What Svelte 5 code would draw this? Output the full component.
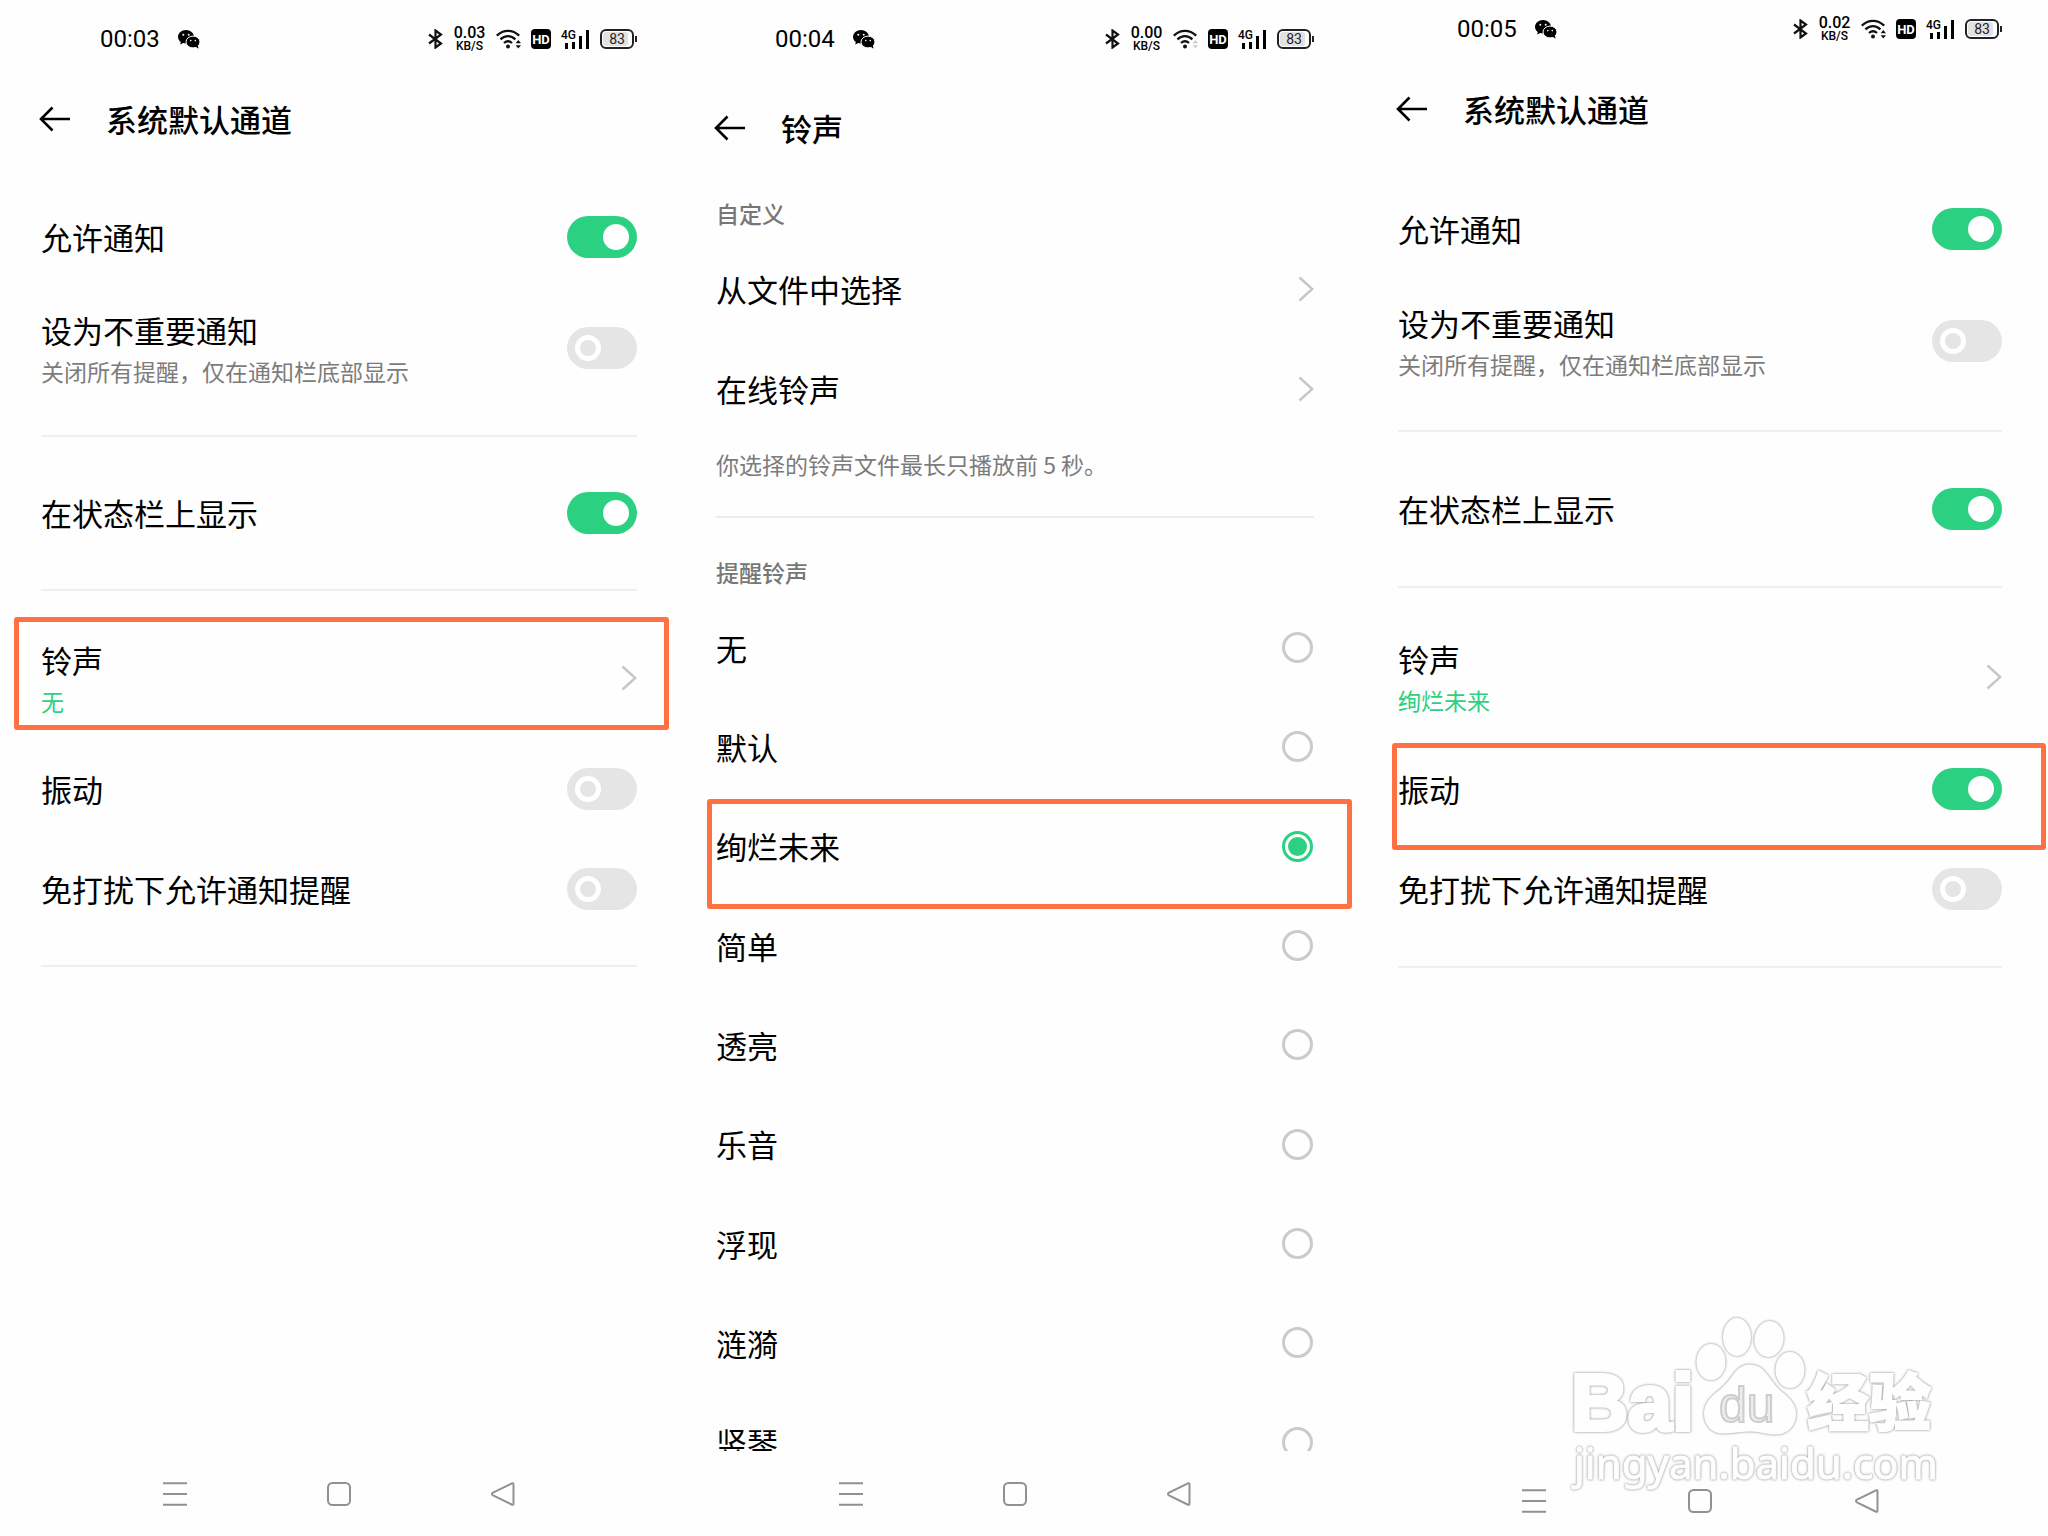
<script>
  const screens = [
    { id: 'before', time: '00:03', speed: '0.03', active: true, ringtone: '无', vibrate: false, marked: 'ringtone' },
    { id: 'after', time: '00:05', speed: '0.02', active: true, ringtone: '绚烂未来', vibrate: true, marked: 'vibrate' }
  ];
  const tones = ['无', '默认', '绚烂未来', '简单', '透亮', '乐音', '浮现', '涟漪', '竖琴'];
  let selected = $state('绚烂未来');
</script>

{#snippet statusBar(time, speed, active)}
  <header class="status">
    <span class="time">{time}</span>
    <svg class="wechat" width="22" height="19" viewBox="0 0 22 19" aria-hidden="true">
      <path d="M8 0C3.600 0 0 3 0 6.800c0 2.100 1.100 3.900 2.800 5.200L2.200 14.600l3-1.500c.9.200 1.800.4 2.800.4 4.400 0 8-3 8-6.700S12.400 0 8 0z" />
      <ellipse cx="15" cy="12" rx="7" ry="5.900" stroke="#fefefe" stroke-width="1" />
      <path d="M17.500 16.500l3 2.200-.5-3.200z" />
      <g fill="#fefefe"><circle cx="5.300" cy="4.800" r="1" /><circle cx="10.700" cy="4.800" r="1" /><circle cx="12.800" cy="10.600" r=".8" /><circle cx="17.300" cy="10.600" r=".8" /></g>
    </svg>
    <div class="indicators">
      <svg width="15" height="20" viewBox="0 0 15 20" fill="none" stroke="#111" stroke-width="2.200" aria-hidden="true">
        <path d="M1 5.500l12 9-5.500 4V1.500l5.500 4-12 9" />
      </svg>
      <span class="speed"><b>{speed}</b><small>KB/S</small></span>
      <svg width="25" height="20" viewBox="0 0 25 20" fill="none" stroke="#111" stroke-width="2.300" aria-hidden="true">
        <path d="M.8 6.600C7.500.2 16.500.2 23.200 6.600M4.400 10.400c4.600-4.400 10.600-4.400 15 0M8 14c2.600-2.300 5.500-2.300 8 0" />
        <circle cx="12" cy="17.500" r="2" fill="#111" stroke="none" />
        <path class:idle={!active} d="M19.600 14.200l2.700-3.200 2.700 3.200zM19.600 16.200l2.700 3.200 2.700-3.200z" fill="#111" stroke="none" />
      </svg>
      <svg width="20" height="20" viewBox="0 0 20 20" aria-label="HD">
        <rect width="20" height="20" rx="4" fill="#000" />
        <text class="hd" x="10" y="15" text-anchor="middle">HD</text>
      </svg>
      <svg width="29" height="20" viewBox="0 0 29 20" aria-label="4G">
        <text class="gen" x="0" y="10">4G</text>
        <path d="M4 14h3v6H4zM11 13h3v7h-3zM18 7h3v13h-3zM25 1h3v19h-3z" fill="#000" />
      </svg>
      <svg width="37" height="20" viewBox="0 0 37 20" aria-label="83%">
        <rect x="3" y="3" width="25" height="14" rx="3" fill="#e2e2e2" />
        <rect x="1" y="1" width="32" height="18" rx="5" fill="none" stroke="#222" stroke-width="2" />
        <path d="M35 7h2v6h-2z" fill="#222" />
        <text class="charge" x="17" y="15" text-anchor="middle">83</text>
      </svg>
    </div>
  </header>
{/snippet}

{#snippet titleBar(title)}
  <div class="title-bar">
    <button class="back" aria-label="返回">
      <svg width="32" height="26" viewBox="0 0 32 26" fill="none" stroke="#000" stroke-width="2.600"><path d="M31 13H2M13.500 1.500L2 13l11.500 11.500" /></svg>
    </button>
    <h1>{title}</h1>
  </div>
{/snippet}

{#snippet chevron()}
  <svg width="16" height="26" viewBox="0 0 16 26" fill="none" stroke="#c6c6c6" stroke-width="2.400" aria-hidden="true"><path d="M1.500 1.500L14.300 13 1.500 24.500" /></svg>
{/snippet}

{#snippet navBar()}
  <nav class="nav">
    <button aria-label="菜单"><svg width="24" height="24" viewBox="0 0 24 24"><path d="M0 1.200h24M0 12h24M0 22.800h24" /></svg></button>
    <button aria-label="主页"><svg width="24" height="24" viewBox="0 0 24 24"><rect x="1" y="1" width="22" height="22" rx="4.500" /></svg></button>
    <button aria-label="后退"><svg width="24" height="24" viewBox="0 0 24 24"><path d="M21 1.300L2 10.700q-2.200 1.300 0 2.600L21 22.700q1.500.5 1.500-1.200v-19q0-1.700-1.500-1.200z" /></svg></button>
  </nav>
{/snippet}

{#snippet settings(s)}
  <section class="phone {s.id}">
    {@render statusBar(s.time, s.speed, s.active)}
    {@render titleBar('系统默认通道')}
    <main class="settings">
      <div class="group">
        <label class="row"><span class="name">允许通知</span><input class="switch" type="checkbox" checked /></label>
        <label class="row tall">
          <span class="stack"><span class="name">设为不重要通知</span><span class="note">关闭所有提醒，仅在通知栏底部显示</span></span>
          <input class="switch" type="checkbox" />
        </label>
      </div>
      <div class="group">
        <label class="row"><span class="name">在状态栏上显示</span><input class="switch" type="checkbox" checked /></label>
      </div>
      <div class="group">
        <button class="row tall" class:marked={s.marked === 'ringtone'}>
          <span class="stack"><span class="name">铃声</span><span class="note value">{s.ringtone}</span></span>
          {@render chevron()}
        </button>
        <label class="row" class:marked={s.marked === 'vibrate'}><span class="name">振动</span><input class="switch" type="checkbox" checked={s.vibrate} /></label>
        <label class="row"><span class="name">免打扰下允许通知提醒</span><input class="switch" type="checkbox" /></label>
      </div>
    </main>
    {@render navBar()}
  </section>
{/snippet}

<div class="board">
  {@render settings(screens[0])}

  <section class="phone picker">
    {@render statusBar('00:04', '0.00', false)}
    {@render titleBar('铃声')}
    <main>
      <h2>自定义</h2>
      <button class="row"><span class="name">从文件中选择</span>{@render chevron()}</button>
      <button class="row"><span class="name">在线铃声</span>{@render chevron()}</button>
      <p class="hint">你选择的铃声文件最长只播放前 5 秒。</p>
      <h2>提醒铃声</h2>
      <div class="tones">
        <div class="tone-list">
          {#each tones as tone}
            <label class="row" class:marked={tone === '绚烂未来'}>
              <span class="name">{tone}</span><input class="radio" type="radio" name="tone" value={tone} bind:group={selected} />
            </label>
          {/each}
        </div>
      </div>
    </main>
    {@render navBar()}
  </section>

  {@render settings(screens[1])}

  <svg class="watermark" width="376" height="190" viewBox="0 0 376 190" aria-label="Baidu 经验">
    <g class="soft">
      <text class="bai" x="1" y="120">Bai</text>
      <ellipse cx="141" cy="52" rx="13.500" ry="17" />
      <ellipse cx="167" cy="27" rx="13" ry="18" />
      <ellipse cx="199" cy="29" rx="13.500" ry="17" transform="rotate(8 199 29)" />
      <ellipse cx="220" cy="60" rx="13.500" ry="17" />
      <path d="M180 55.500c8 0 12 4 16 9 5 6 7 11 14 17 9 7 15 13 15 22 0 12-8 20-19 20-9 0-17-3-26-3s-18 2-27 2c-12 0-18-9-18-19 0-9 5-15 14-22 8-6 11-11 16-18 4-5 8-8 15-8z" />
      <text class="jy" x="237" y="116">经验</text>
      <text class="site" x="4" y="169">jingyan.baidu.com</text>
    </g>
    <text class="du" x="149" y="112">du</text>
  </svg>
</div>

<style>
  :global(body) { margin: 0; background: #fefefe; }
  .board {
    position: relative;
    display: grid;
    grid-template-columns: 676fr 678fr 694fr;
    min-height: 100vh;
    color: #000;
    font-family: "Noto Sans CJK SC", sans-serif;
    overflow: hidden;
  }
  .phone { display: flex; flex-direction: column; min-width: 0; box-sizing: border-box; }
  .before { --row-tall: 122px; --pad: 26px; --mark: 0 -32px 9px -27px; padding: 15px 39px 30px 41px; }
  .picker { --mark: 2px -39px -13px -9px; padding: 15px 40px 30px; }
  .after { --row-tall: 124px; --pad: 27px; --mark: 4px -44px -11px -6px; padding: 5px 46px 23px 44px; }

  button { padding: 0; border: 0; background: none; color: inherit; font: inherit; text-align: left; }
  svg { display: block; flex: none; }

  .status { display: flex; align-items: center; height: 48px; padding-left: 59px; font-family: Roboto, sans-serif; }
  .time { font-size: 24px; line-height: 30px; }
  .wechat { margin-left: 18px; }
  .indicators { display: flex; align-items: center; gap: 10px; margin-left: auto; }
  .speed { display: flex; flex-direction: column; align-items: center; width: 33px; }
  .speed b { font-size: 16px; line-height: 14px; font-weight: 500; }
  .speed small { font-size: 12px; line-height: 12px; font-weight: 500; }
  .idle { opacity: .2; }
  .hd { font: 700 13px Roboto, sans-serif; fill: #fff; }
  .gen { font: 500 12px Roboto, sans-serif; }
  .charge { font: 400 14px Roboto, sans-serif; fill: #222; }

  .title-bar { display: flex; align-items: center; gap: 35px; height: 46px; margin: 33px 0 45px -2px; }
  .after .title-bar { margin-bottom: 47px; }
  .picker .title-bar { margin: 42px 0 44px -2px; }
  h1 { margin: 0; font-size: 31px; line-height: 44px; font-weight: 500; }

  .group { padding-bottom: var(--pad); margin-bottom: var(--pad); border-bottom: 2px solid #efefef; }
  .row { position: relative; display: flex; align-items: center; justify-content: space-between; width: 100%; height: 100px; }
  .tall { height: var(--row-tall); }
  .name { font-size: 31px; line-height: 46px; }
  .stack { display: flex; flex-direction: column; }
  .note { font-size: 23px; line-height: 36px; color: #7c7c7c; }
  .value { color: #2bd181; }
  .marked::after { content: ""; position: absolute; inset: var(--mark); border: 5px solid #ff7043; border-radius: 3px; pointer-events: none; }

  .switch { appearance: none; display: flex; align-items: center; box-sizing: border-box; flex: none; width: 70px; height: 42px; margin: 0; padding: 0 8px; border-radius: 21px; background: #e5e5e5; }
  .switch::before { content: ""; box-sizing: border-box; width: 26px; height: 26px; border: 5px solid #fff; border-radius: 50%; }
  .switch:checked { justify-content: flex-end; background: #2bd181; }
  .switch:checked::before { background: #fff; }

  h2 { margin: 0; font-size: 23px; line-height: 36px; font-weight: 500; color: #777; }
  .picker main h2:first-child { margin-bottom: 8px; }
  .hint { margin: 0 0 36px; padding: 7px 0 34px; border-bottom: 2px solid #ececec; font-size: 23px; line-height: 36px; color: #7c7c7c; }
  .tones { height: 853px; margin: 8px -40px 0; padding: 0 41px 0 40px; overflow: hidden; }
  .tone-list { display: grid; grid-template-rows: repeat(9, 1fr); height: 894px; }
  .tone-list .row { height: auto; }
  .radio { appearance: none; display: grid; place-items: center; box-sizing: border-box; width: 31px; height: 31px; margin: 0; border: 3px solid #cbcbcb; border-radius: 50%; }
  .radio:checked { border-color: #2bd181; }
  .radio:checked::before { content: ""; width: 19px; height: 19px; border-radius: 50%; background: #2bd181; }

  .nav { display: flex; justify-content: space-between; width: 352px; margin: auto auto 0; }
  .after .nav { width: 357px; }
  .nav svg { fill: none; stroke: #919191; stroke-width: 2; }

  .watermark { position: absolute; right: 102px; bottom: 36px; pointer-events: none; }
  .soft { fill: #fefefe; stroke: #fefefe; stroke-width: 2; filter: drop-shadow(0 0 1px #999) drop-shadow(0 0 1px #ddd); }
  .bai { font: 700 79px "Liberation Sans", sans-serif; stroke-width: 4px; }
  .du { font: 400 50px "Liberation Sans", sans-serif; fill: #ededed; stroke: #cdcdcd; stroke-width: 2px; }
  .jy { font: 900 62px "Noto Sans CJK SC", sans-serif; stroke-width: 2px; }
  .site { font: 400 42px "Noto Sans", sans-serif; stroke-width: 1px; }
</style>
